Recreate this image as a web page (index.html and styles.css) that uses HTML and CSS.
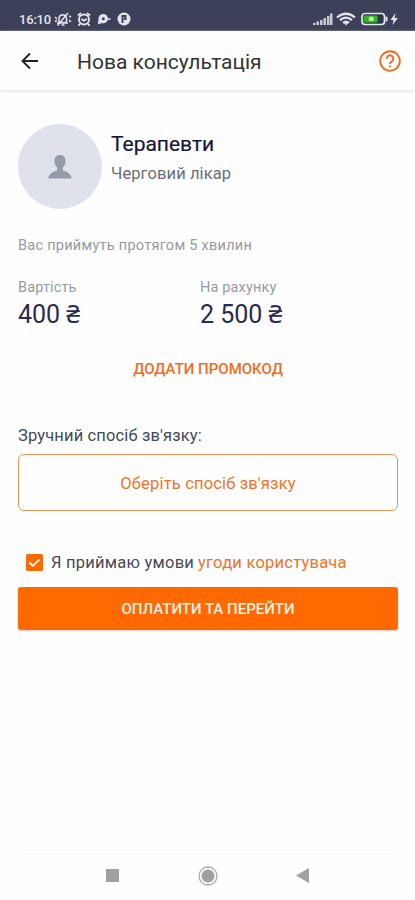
FILE: index.html
```html
<!DOCTYPE html>
<html lang="uk">
<head>
<meta charset="utf-8">
<title>Нова консультація</title>
<link rel="stylesheet" href="styles.css">
</head>
<body>
<div class="screen">
  <div class="status">
    <span class="time">16:10</span>
    <svg class="status-left" width="78" height="16" viewBox="0 0 78 16" fill="none" stroke="#e4e5ec" stroke-width="1.500">
      <path d="M5 11.500V7a3.800 3.800 0 0 1 7.500 0v4.500zM3 12h11M7.500 14h3M3.500 14.500L14 2M1 6l2 2M1 10.500l2-1M15 5l2 1M15 9l2 2"/>
      <g stroke-width="1.900"><circle cx="30" cy="8.500" r="5"/><path d="M24 4.500l3-2.500M36 4.500l-3-2.500M27.500 8l2.200 1.700L33 8M26 13l-1.500 1.500M34 13l1.500 1.500"/></g>
      <path d="M44 13.500l.5-6a4.700 4.700 0 1 1 4.700 4.800h-2z" fill="#e4e5ec" stroke="none"/><circle cx="49.300" cy="7.800" r="1.500" fill="#3d4059" stroke="none"/><path d="M53 8h3.500"/>
      <circle cx="70" cy="8" r="6.500" fill="#e4e5ec" stroke="none"/><path d="M68.500 12V5h3v3h-1.500" stroke="#3d4059" stroke-width="2"/>
    </svg>
    <svg class="status-right" width="86" height="16" viewBox="0 0 86 16">
      <path fill="#c9cbd7" d="M0 14v-2h2.500v2zM3.500 14v-3.500H6V14zM7 14V9h2.500v5zM10.500 14V7H13v7zM14 14V5h2.500v9zM17 14V2.500h2.500V14z"/>
      <g fill="none" stroke="#e4e5ec" stroke-width="2.200"><path d="M24 6.500q9-7.500 18 0M27 9.200q6-5 12 0M30 11.800q3-2.500 6 0"/></g><path d="M31 12h4l-2 2.500z" fill="#e4e5ec"/>
      <rect x="49" y="2.500" width="22.500" height="11" rx="3" fill="#30344b" stroke="#e4e5ec" stroke-width="1.700"/><path d="M72.500 6H74v4h-1.500" stroke="#e4e5ec" fill="#e4e5ec"/><rect x="50.500" y="4.500" width="14" height="7" rx="1" fill="#30b51b"/><path d="M56 9.500q-1-4 2-4t3 3q-1 3-5 1z" fill="#c7edbf"/>
      <path d="M82.500 2L77.500 9h3l-1 5 5.500-7h-3.500z" fill="#e4e5ec"/>
    </svg>
  </div>
  <header class="bar">
    <svg class="back" width="18" height="18" viewBox="0 0 18 18" fill="none" stroke="#222" stroke-width="1.900"><path d="M17 9H2M9 1.500L1.500 9 9 16.500"/></svg>
    <h1 class="title">Нова консультація</h1>
    <svg class="help" width="22" height="22" viewBox="0 0 22 22" fill="none" stroke="#f26a22" stroke-width="1.900"><circle cx="11" cy="11" r="9.800"/><path d="M7.700 8.700a3.300 3.300 0 1 1 5.600 2.300C12 12.200 11 12.600 11 14"/><path d="M11 15.300v2"/></svg>
  </header>
  <main class="content">
    <section class="doctor">
      <div class="avatar"><svg width="24" height="24" viewBox="0 0 24 24" fill="#949ba8"><path d="M12 0c-3.500 0-5.500 2.400-5.500 6 0 3 1.200 5.200 2.700 6.600v2.800C5 16.600.8 18.500.3 23.500h23.400c-.5-5-4.700-6.900-8.900-8.100v-2.800c1.500-1.400 2.700-3.600 2.700-6.600 0-3.600-2-6-5.500-6z"/></svg></div>
      <div class="who">
        <div class="name">Терапевти</div>
        <div class="role">Черговий лікар</div>
      </div>
    </section>
    <p class="wait">Вас приймуть протягом 5 хвилин</p>
    <section class="money">
      <div><div class="label">Вартість</div><div class="sum">400 ₴</div></div>
      <div><div class="label">На рахунку</div><div class="sum">2 500 ₴</div></div>
    </section>
    <div class="promo"><span>ДОДАТИ ПРОМОКОД</span></div>
    <div class="ticks"><i></i><i></i></div>
    <div class="method"><span>Зручний спосіб зв'язку:</span></div>
    <div class="choose"><span>Оберіть спосіб зв'язку</span></div>
    <div class="agree">
      <svg class="check" width="17" height="17" viewBox="0 0 17 17"><rect width="17" height="17" rx="1.500" fill="#fd6903"/><path d="M3.500 8.500l3.400 3.300 6.600-6.500" fill="none" stroke="#fff" stroke-width="1.800"/></svg>
      <span class="terms">Я приймаю умови</span><span class="link">угоди користувача</span>
    </div>
    <div class="pay"><span>ОПЛАТИТИ ТА ПЕРЕЙТИ</span></div>
  </main>
  <nav class="nav">
    <svg width="13" height="13" viewBox="0 0 13 13"><rect width="13" height="13" fill="#a0a0a0"/></svg>
    <svg width="20" height="20" viewBox="0 0 20 20"><circle cx="10" cy="10" r="9" fill="none" stroke="#aaa" stroke-width="1.300"/><circle cx="10" cy="10" r="6.500" fill="#a0a0a0"/></svg>
    <svg width="13" height="15" viewBox="0 0 13 15"><path d="M13 0v15L0 7.500z" fill="#a0a0a0"/></svg>
  </nav>
</div>
</body>
</html>
```
FILE: styles.css
```css
* { box-sizing: border-box; }
body { margin: 0; background: #fefefe; font-family: Roboto, "Noto Sans", sans-serif; color: #454957; }
.screen { width: 415px; height: 900px; display: flex; flex-direction: column; overflow: hidden; }
.status { height: 31px; background: #3d4059; display: flex; align-items: flex-start; padding: 11px 16px 0 19px; color: #e4e5ec; }
.time { font-size: 13px; line-height: 18px; letter-spacing: -0.2px; width: 35px; font-weight: 500; white-space: nowrap; }
.status-right { margin-left: auto; }
.bar { height: 60px; display: flex; align-items: center; padding: 0 14px 0 21px; border-bottom: 1px solid #ededed; box-shadow: 0 1px 3px #e9e9e9; }
.title { margin: 3px 0 0 38px; font-size: 21px; font-weight: 400; line-height: 28px; color: #333; white-space: nowrap; }
.help { margin-left: auto; }
.content { flex: 1; padding: 33px 17px 0 18px; }
.doctor { display: flex; height: 85px; }
.avatar { width: 84px; height: 85px; border-radius: 50%; background: #dfe2ea; display: flex; align-items: center; justify-content: center; }
.who { padding: 7px 0 0 9px; white-space: nowrap; }
.name { font-size: 21px; line-height: 26px; font-weight: 400; color: #14173c; -webkit-text-stroke: 0.2px #14173c; }
.role { font-size: 16.5px; line-height: 20px; margin-top: 7px; letter-spacing: 0.1px; color: #696d78; }
.wait { margin: 28px 0 0; font-size: 14.5px; line-height: 18px; letter-spacing: 0.26px; color: #989a9f; white-space: nowrap; }
.money { display: grid; grid-template-columns: 182px 1fr; margin-top: 24px; }
.label { font-size: 14.5px; line-height: 18px; letter-spacing: 0.15px; color: #989a9f; }
.sum { font-size: 25px; line-height: 32px; margin-top: 2px; color: #292c50; }
.promo { text-align: center; margin-top: 28px; font-size: 15px; line-height: 20px; font-weight: 500; color: #f36b1c; }
.ticks { display: flex; justify-content: space-between; margin-top: 7px; }
.ticks i { width: 2px; height: 2px; background: #f0f0f1; }
.method { margin-top: 38px; font-size: 16.5px; line-height: 20px; letter-spacing: 0.14px; }
.choose { margin-top: 8px; height: 57px; padding-top: 2px; border: 1px solid #ec9357; border-radius: 6px; display: flex; align-items: center; justify-content: center; font-size: 16.5px; letter-spacing: 0.17px; color: #ed752c; }
.agree { display: flex; align-items: center; height: 20px; margin-top: 41px; padding-left: 8px; font-size: 16.5px; letter-spacing: 0.23px; white-space: nowrap; }
.terms { margin-left: 8px; }
.link { margin-left: 4px; color: #f0722b; }
.pay { margin-top: 15px; height: 43px; border-radius: 3px; background: #ff6900; color: #fff3e9; box-shadow: 0 1px 2px #ccc; display: flex; align-items: center; justify-content: center; font-size: 15px; font-weight: 500; }
.nav { height: 50px; margin: 0 18px; border-top: 1px solid #f7f7f7; display: flex; align-items: center; justify-content: space-between; padding: 0 88px; }
```
